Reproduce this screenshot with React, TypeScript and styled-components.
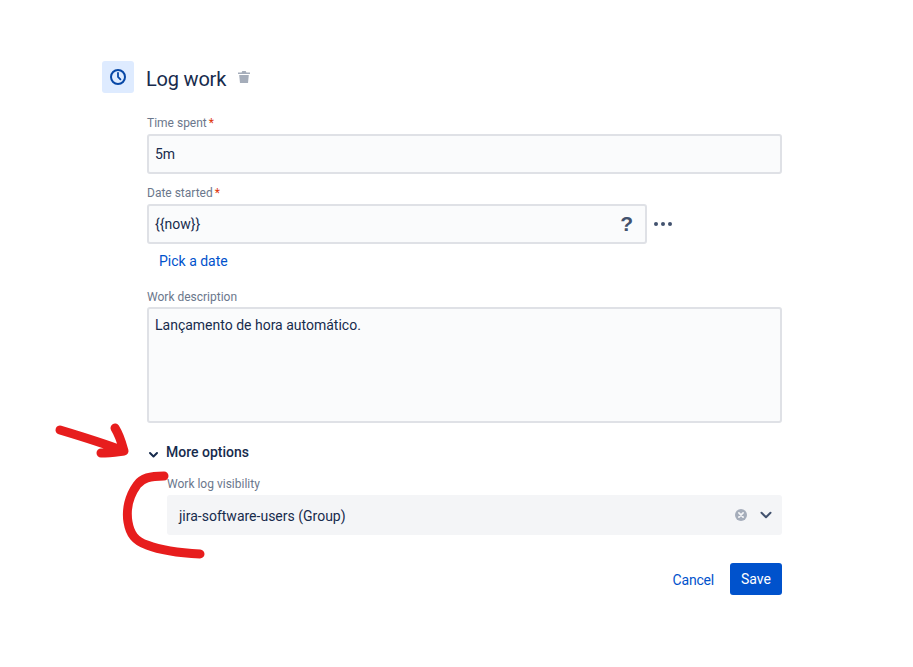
import React from 'react';
import styled, { createGlobalStyle } from 'styled-components';

const GlobalStyle = createGlobalStyle`
  html, body {
    margin: 0;
    padding: 0;
    background: #fff;
  }
  body {
    font-family: Roboto, "Noto Sans", sans-serif;
    color: #172b4d;
  }
`;

const Page = styled.div`
  position: relative;
  width: 913px;
  height: 667px;
  overflow: hidden;
  box-sizing: border-box;
  padding: 61px 131px 0 102px;
`;

const Header = styled.div`
  display: flex;
  align-items: center;
  height: 32px;
  gap: 12px;
`;

const IconTile = styled.div`
  width: 32px;
  height: 32px;
  border-radius: 3px;
  background: #deebff;
  display: flex;
  align-items: center;
  justify-content: center;
`;

const Title = styled.h1`
  margin: 4px 0 0;
  font-size: 20px;
  line-height: 36px;
  font-weight: 400;
  letter-spacing: -0.2px;
  color: #172b4d;
`;

const TrashButton = styled.span`
  display: flex;
  margin-left: -1px;
`;

const Body = styled.div`
  margin-left: 45px;
  padding-top: 22px;
`;

const Label = styled.label<{ $top?: number; $bottom?: number }>`
  display: block;
  font-size: 12px;
  line-height: 16px;
  font-weight: 400;
  color: #6b778c;
  margin-top: ${p => p.$top ?? 0}px;
  margin-bottom: ${p => p.$bottom ?? 3}px;
`;

const Required = styled.span`
  color: #de350b;
  margin-left: 2px;
`;

const Row = styled.div`
  display: flex;
  align-items: center;
`;

const InputBox = styled.div<{ $width?: number; $height?: number }>`
  box-sizing: border-box;
  width: ${p => (p.$width ? `${p.$width}px` : '100%')};
  height: ${p => p.$height ?? 40}px;
  border: 2px solid #dfe1e6;
  border-radius: 3px;
  background: #fafbfc;
  padding: 0 6px;
  display: flex;
  align-items: center;
  justify-content: space-between;
  font-size: 14px;
  line-height: 20px;
  color: #172b4d;
`;

const AreaBox = styled(InputBox)`
  align-items: flex-start;
  padding-top: 6px;
`;

const Help = styled.span`
  font-family: "Liberation Sans", sans-serif;
  font-size: 21px;
  font-weight: 700;
  color: #42526e;
  margin-right: 6px;
`;

const Dots = styled.span`
  display: flex;
  gap: 3px;
  margin-left: 7px;
`;

const Dot = styled.i`
  width: 4px;
  height: 4px;
  border-radius: 50%;
  background: #42526e;
`;

const TextLink = styled.a`
  color: #0052cc;
  font-size: 14px;
  line-height: 20px;
  text-decoration: none;
`;

const PickDate = styled(TextLink)`
  display: block;
  margin: 7px 0 0 12px;
`;

const CancelLink = styled(TextLink)`
  margin-top: 2px;
  letter-spacing: -0.2px;
`;

const MoreOptions = styled.div`
  display: flex;
  align-items: center;
  margin: 19px 0 0 0;
  height: 20px;
  font-size: 14px;
  font-weight: 500;
  color: #172b4d;
  gap: 6px;
`;

const Chevron = styled.span`
  display: flex;
  margin-top: 5px;
`;

const Indented = styled.div`
  margin-left: 20px;
  padding-top: 14px;
`;

const SelectBox = styled.div`
  box-sizing: border-box;
  height: 40px;
  border-radius: 3px;
  background: #f4f5f7;
  display: flex;
  align-items: center;
  padding: 0 9px 0 12px;
  font-size: 14px;
  color: #172b4d;
`;

const SelectValue = styled.span`
  flex: 1;
  padding-top: 2px;
`;

const SelectIcons = styled.span`
  display: flex;
  align-items: center;
  gap: 11px;
`;

const Actions = styled.div`
  display: flex;
  justify-content: flex-end;
  align-items: center;
  margin-top: 28px;
  gap: 16px;
`;

const SaveButton = styled.button`
  width: 52px;
  height: 32px;
  border: 0;
  border-radius: 3px;
  background: #0052cc;
  color: #fff;
  font-family: inherit;
  font-size: 14px;
  padding: 0;
`;

const Markup = styled.svg`
  position: absolute;
  left: 0;
  top: 0;
  pointer-events: none;
`;

export default function App() {
  return (
    <>
      <GlobalStyle />
      <Page>
        <Header>
          <IconTile>
            <svg width="18" height="18" viewBox="0 0 18 18" fill="none">
              <circle cx="9" cy="9" r="7" stroke="#0747a6" strokeWidth="2" />
              <path d="M9 4.8V9l2.4 2.4" stroke="#0747a6" strokeWidth="1.8" strokeLinecap="round" />
            </svg>
          </IconTile>
          <Title>Log work</Title>
          <TrashButton>
            <svg width="14" height="14" viewBox="0 0 14 14" fill="#a5adba">
              <path d="M1 2.4h3.6L5.3 1h3.4l.7 1.4H13v1.5H1z" />
              <path d="M2.2 5h9.6l-.8 8H3z" />
            </svg>
          </TrashButton>
        </Header>
        <Body>
          <Label>
            Time spent<Required>*</Required>
          </Label>
          <InputBox>5m</InputBox>
          <Label $top={11}>
            Date started<Required>*</Required>
          </Label>
          <Row>
            <InputBox $width={500}>
              {'{{now}}'}
              <Help>?</Help>
            </InputBox>
            <Dots>
              <Dot />
              <Dot />
              <Dot />
            </Dots>
          </Row>
          <PickDate>Pick a date</PickDate>
          <Label $top={18} $bottom={2}>
            Work description
          </Label>
          <AreaBox $height={116}>Lançamento de hora automático.</AreaBox>
          <MoreOptions>
            <Chevron>
              <svg width="13" height="13" viewBox="0 0 13 13" fill="none">
                <path d="M3 5l3.5 3.5L10 5" stroke="#172b4d" strokeWidth="2" strokeLinecap="round" strokeLinejoin="round" />
              </svg>
            </Chevron>
            More options
          </MoreOptions>
          <Indented>
            <Label>Work log visibility</Label>
            <SelectBox>
              <SelectValue>jira-software-users (Group)</SelectValue>
              <SelectIcons>
                <svg width="14" height="14" viewBox="0 0 14 14">
                  <circle cx="7" cy="7" r="6" fill="#a5adba" />
                  <path d="M4.9 4.9l4.2 4.2M9.1 4.9L4.9 9.1" stroke="#f4f5f7" strokeWidth="1.7" strokeLinecap="round" />
                </svg>
                <svg width="14" height="14" viewBox="0 0 14 14" fill="none">
                  <path d="M2.5 4.8L7 9.2l4.5-4.4" stroke="#42526e" strokeWidth="2" strokeLinecap="round" strokeLinejoin="round" />
                </svg>
              </SelectIcons>
            </SelectBox>
          </Indented>
          <Actions>
            <CancelLink>Cancel</CancelLink>
            <SaveButton>Save</SaveButton>
          </Actions>
        </Body>
        <Markup width="913" height="667" viewBox="0 0 913 667" fill="none">
          <g stroke="#e71d1d" strokeWidth="9" strokeLinecap="round" strokeLinejoin="round">
            <path d="M60 430C80 436 100 442 124 451C116 452 110 453 101 453M124 451C122 444 120 436 115 428" />
            <path d="M164 476C150 476 142 478 137 485C129 496 126 510 128 522C130 534 135 541 147 545C160 550 180 553 200 554" />
          </g>
        </Markup>
      </Page>
    </>
  );
}
